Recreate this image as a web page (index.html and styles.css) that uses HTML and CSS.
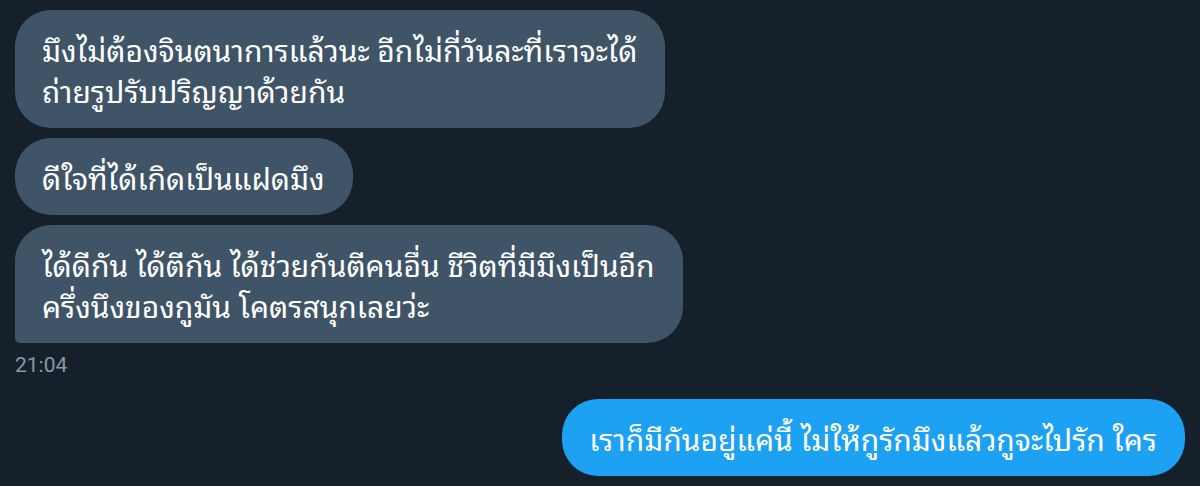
FILE: index.html
```html
<!DOCTYPE html>
<html lang="th">
<head>
<meta charset="utf-8">
<link rel="stylesheet" href="styles.css">
</head>
<body>
<div class="chat">
  <div class="bubble in">มึงไม่ต้องจินตนาการแล้วนะ อีกไม่กี่วันละที่เราจะได้<br>ถ่ายรูปรับปริญญาด้วยกัน</div>
  <div class="bubble in">ดีใจที่ได้เกิดเป็นแฝดมึง</div>
  <div class="bubble in last">ได้ดีกัน ได้ตีกัน ได้ช่วยกันตีคนอื่น ชีวิตที่มีมึงเป็นอีก<br>ครึ่งนึงของกูมัน โคตรสนุกเลยว่ะ</div>
  <div class="time">21:04</div>
  <div class="bubble out">เราก็มีกันอยู่แค่นี้ ไม่ให้กูรักมึงแล้วกูจะไปรัก ใคร</div>
</div>
</body>
</html>
```

FILE: styles.css
```css
html, body {
  margin: 0;
  padding: 0;
  background: #15202b;
  height: 100%;
}
.chat {
  display: flex;
  flex-direction: column;
  align-items: flex-start;
  padding: 10px 15px 0 15px;
  gap: 10px;
  font-family: "Noto Sans Thai Looped", "Loma", "Garuda", "Waree", "Laksaman", "Kinnari", "Norasi", "Tlwg Typo", "Noto Serif Thai", "Noto Sans", sans-serif;
}
.bubble {
  font-size: 30px;
  line-height: 41px;
  color: #ffffff;
  padding: 18px 28px 18px 27px;
  border-radius: 36px;
  white-space: nowrap;
}
.in {
  background: #3f5567;
}
.in.last {
  border-bottom-left-radius: 5px;
}
.time {
  margin-top: -2px;
  font-size: 21px;
  line-height: 28px;
  color: #8899a6;
  font-family: "Roboto", sans-serif;
}
.out {
  align-self: flex-end;
  margin-top: 10px;
  background: #1da1f2;
}
```
